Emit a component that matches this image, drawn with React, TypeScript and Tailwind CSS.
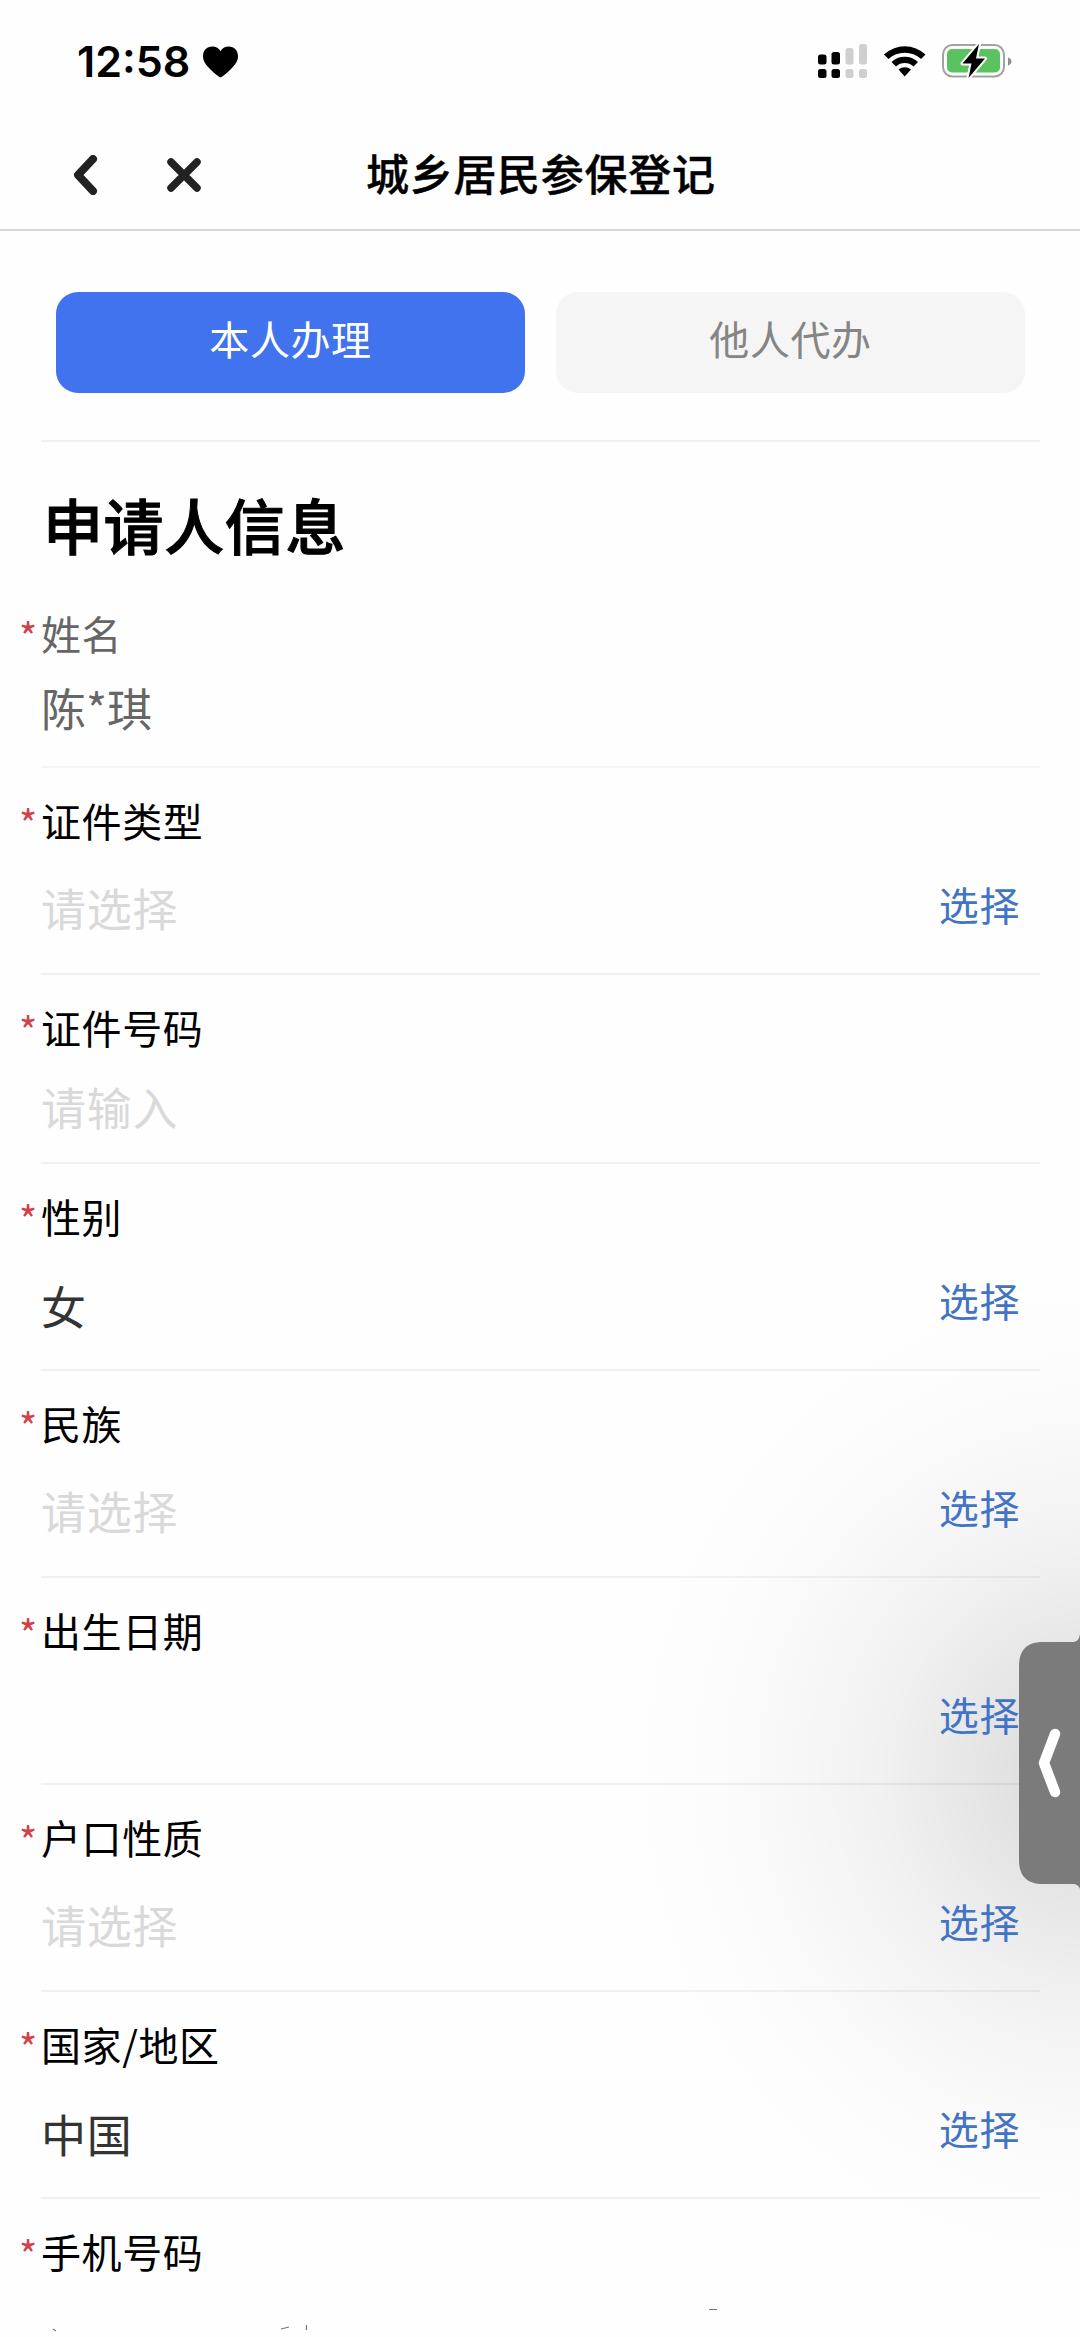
import * as React from 'react';
import clsx from 'clsx';

type FieldProps = {
  label: string;
  value?: string;
  type?: 'select' | 'input';
  filled?: boolean;
};

const fields: FieldProps[] = [
  { label: '证件类型', value: '请选择', type: 'select' },
  { label: '证件号码', value: '请输入', type: 'input' },
  { label: '性别', value: '女', type: 'select', filled: true },
  { label: '民族', value: '请选择', type: 'select' },
  { label: '出生日期', type: 'select' },
  { label: '户口性质', value: '请选择', type: 'select' },
  { label: '国家/地区', value: '中国', type: 'select', filled: true },
];

function Label({ text, className }: { text: string; className?: string }) {
  return (
    <div className={clsx('flex h-10 items-center text-[40px] leading-10 tracking-[0.6px]', className)}>
      <span className="w-[22px] shrink-0 pt-[3px] text-[39px] leading-10 tracking-normal text-[#d0414b]">*</span>
      {text}
    </div>
  );
}

function Field({ label, value, type, filled }: FieldProps) {
  const isSelect = type === 'select';
  return (
    <div className={clsx('flex flex-col pt-8', isSelect ? 'h-[207px]' : 'h-[189px]')}>
      <Label text={label} className="text-black" />
      <div className={clsx('ml-[22px] flex flex-1 justify-between border-b-2 border-black/5', isSelect ? 'pt-11' : 'pt-9')}>
        <span className={clsx('text-[45px] leading-[46px] tracking-[0.8px]', filled ? 'pt-[3px] text-[#333]' : 'pt-px text-[#d9d9d9]')}>{value}</span>
        {isSelect && <button className="mr-5 h-10 text-[40px] leading-10 tracking-[0.6px] text-[#4273c4]">选择</button>}
      </div>
    </div>
  );
}

function StatusBar() {
  return (
    <div className="flex h-[120px] items-center justify-between pr-[68px] pl-[77px]">
      <div className="flex items-center gap-[13px] pt-[3px]">
        <span className="font-[Inter] text-[43px] leading-none font-semibold">12:58</span>
        <svg width="35" height="32" viewBox="0 0 36 32">
          <path d="M18 32C16 31 12 28 8 24C3 19 0 15 0 10C0 4 4 0 9.500 0C13.500 0 16.500 2 18 5C19.500 2 22.500 0 26.500 0C32 0 36 4 36 10C36 15 33 19 28 24C24 28 20 31 18 32Z" />
        </svg>
      </div>
      <svg className="mt-0.5" width="194" height="36" viewBox="818 43 194 36">
        <g fill="#000">
          <rect x="818" y="54.500" width="8.500" height="10" rx="2.500" />
          <rect x="831.500" y="52" width="8.500" height="12.500" rx="2.500" />
          <rect x="818" y="69" width="8.500" height="9" rx="2.500" />
          <rect x="831.500" y="69" width="8.500" height="9" rx="2.500" />
        </g>
        <g fill="#cfcfcf">
          <rect x="845.500" y="48" width="8" height="16.500" rx="2.500" />
          <rect x="859" y="44" width="8" height="20.500" rx="2.500" />
          <rect x="845.500" y="69" width="8" height="9" rx="2.500" />
          <rect x="859" y="69" width="8" height="9" rx="2.500" />
        </g>
        <path d="M884 54.500A30.500 30.500 0 0 1 925.500 54.500L921 59A24 24 0 0 0 888.500 59Z" />
        <path d="M891.500 62A19.500 19.500 0 0 1 918 62L913.500 66.500A13 13 0 0 0 896 66.500Z" />
        <path d="M898.500 69.500A9.500 9.500 0 0 1 911 69.500L904.700 76.500Z" />
        <rect x="943" y="45" width="61" height="31.500" rx="9.500" fill="none" stroke="#a2a2a2" strokeWidth="2" />
        <rect x="947" y="49" width="53" height="23.500" rx="5" fill="#5ac35f" />
        <path d="M1008 57.500C1010.500 58.500 1011.500 60 1011.500 61.500C1011.500 63 1010.500 64.500 1008 65.500Z" fill="#8d8d8d" />
        <path d="M979 44L962.500 63.500H971.500L968.500 78L985 58.500H976Z" stroke="#fff" strokeWidth="4" paintOrder="stroke" strokeLinejoin="round" />
      </svg>
    </div>
  );
}

function NavBar() {
  return (
    <div className="grid h-[111px] grid-cols-[366px_1fr] items-center border-b-2 border-[#d6d6d6]">
      <div className="flex items-center pl-[74px]">
        <svg width="24" height="40" viewBox="0 0 24 40" fill="none" stroke="#222" strokeWidth="8" strokeLinecap="round" strokeLinejoin="round">
          <path d="M19 4L4 20L19 36" />
        </svg>
        <svg className="ml-[69px]" width="34" height="34" viewBox="0 0 34 34" stroke="#222" strokeWidth="7.500" strokeLinecap="round">
          <path d="M4 4L30 30M30 4L4 30" />
        </svg>
      </div>
      <h1 className="pb-1 text-[43px] leading-none font-medium tracking-[0.7px] [-webkit-text-stroke:0.4px_#000]">城乡居民参保登记</h1>
    </div>
  );
}

export default function App() {
  return (
    <div className="relative h-[2337px] w-[1080px] overflow-hidden bg-[#fefefe] font-['Noto_Sans_CJK_SC',sans-serif] text-black">
      {/* soft shadow cast by the drawer handle */}
      <div className="absolute inset-0 bg-[radial-gradient(470px_500px_at_1090px_1775px,rgba(0,0,0,0.15)_0%,rgba(0,0,0,0.105)_20%,rgba(0,0,0,0.052)_45%,rgba(0,0,0,0.026)_62%,rgba(0,0,0,0.009)_80%,rgba(0,0,0,0)_100%)]" />
      <div className="relative">
        <StatusBar />
        <NavBar />
        <div className="ml-[41px] flex h-[211px] w-[999px] gap-[31px] border-b-2 border-[#f1f1f2] pt-[61px] pr-[15px] pl-[15px]">
          <button className="h-[101px] flex-1 rounded-[22px] bg-[#4073ed] pb-2.5 text-[40px] leading-none tracking-[0.6px] text-white">本人办理</button>
          <button className="h-[101px] flex-1 rounded-[22px] bg-[#f5f5f5] pb-2.5 text-[40px] leading-none tracking-[0.6px] text-[#858585]">他人代办</button>
        </div>
        <h2 className="pt-[52px] pl-[43px] text-[60px] leading-[60px] font-medium tracking-[0.6px] [-webkit-text-stroke:1px_#000]">申请人信息</h2>
        <div className="pl-[19px] pr-10">
          <div className="flex h-[214px] flex-col pt-[59px]">
            <Label text="姓名" className="text-[#666]" />
            <div className="ml-[22px] flex-1 border-b-2 border-black/4 pt-8 text-[45px] leading-[46px] text-[#666]">陈*琪</div>
          </div>
          {fields.map((field) => (
            <Field key={field.label} {...field} />
          ))}
          <div className="pt-8">
            <Label text="手机号码" className="text-black" />
          </div>
        </div>
      </div>
      {/* tips of the clipped row below */}
      <svg className="absolute bottom-0 left-0" width="1080" height="32" viewBox="0 2305 1080 32" fill="none" stroke="#777" strokeWidth="1.200">
        <path d="M53 2329L56 2331M281 2329L289 2327M306.500 2325V2330M709 2309.500H717" />
      </svg>
      <svg className="absolute top-[1632px] right-0" width="61" height="260" viewBox="1019 1632 61 260">
        <path d="M1080 1634C1079 1640 1077 1642 1072 1642H1043C1027 1642 1019 1650 1019 1666V1860C1019 1876 1027 1884 1043 1884H1072C1077 1884 1079 1886 1080 1889Z" fill="#7b7b7b" />
        <path d="M1055 1734L1044 1763L1055 1792" fill="none" stroke="#fff" strokeWidth="10.500" strokeLinecap="round" strokeLinejoin="round" />
      </svg>
    </div>
  );
}
